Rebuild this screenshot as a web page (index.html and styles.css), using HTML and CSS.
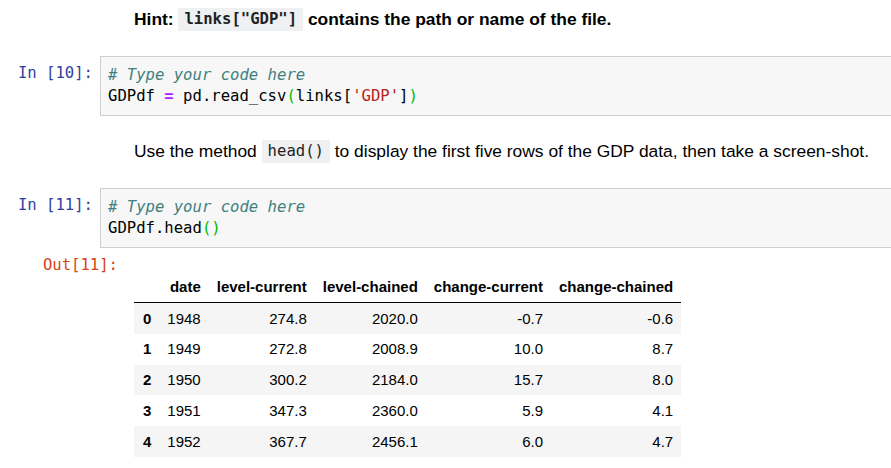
FILE: index.html
```html
<!DOCTYPE html>
<html>
<head>
<meta charset="utf-8">
<link rel="stylesheet" href="styles.css">
</head>
<body>
<div class="nb">
  <div class="md md-first">
    <p class="hint"><b>Hint: <code class="ic">links["GDP"]</code> contains the path or name of the file.</b></p>
  </div>

  <div class="cell cell-first">
    <div class="prompt in">In&nbsp;[10]:</div>
    <div class="input"><pre><span class="cm"># Type your code here</span>
GDPdf <span class="op">=</span> pd.read_csv<span class="br">(</span>links[<span class="st">'GDP'</span>]<span class="br">)</span></pre></div>
  </div>

  <div class="md">
    <p>Use the method <code class="ic">head()</code> to display the first five rows of the GDP data, then take a screen-shot.</p>
  </div>

  <div class="cell">
    <div class="prompt in">In&nbsp;[11]:</div>
    <div class="input"><pre><span class="cm"># Type your code here</span>
GDPdf.head<span class="br">()</span></pre></div>
  </div>

  <div class="output">
    <div class="prompt out">Out[11]:</div>
    <table class="df">
      <thead>
        <tr><th></th><th>date</th><th>level-current</th><th>level-chained</th><th>change-current</th><th>change-chained</th></tr>
      </thead>
      <tbody>
        <tr><th>0</th><td>1948</td><td>274.8</td><td>2020.0</td><td>-0.7</td><td>-0.6</td></tr>
        <tr><th>1</th><td>1949</td><td>272.8</td><td>2008.9</td><td>10.0</td><td>8.7</td></tr>
        <tr><th>2</th><td>1950</td><td>300.2</td><td>2184.0</td><td>15.7</td><td>8.0</td></tr>
        <tr><th>3</th><td>1951</td><td>347.3</td><td>2360.0</td><td>5.9</td><td>4.1</td></tr>
        <tr><th>4</th><td>1952</td><td>367.7</td><td>2456.1</td><td>6.0</td><td>4.7</td></tr>
      </tbody>
    </table>
  </div>
</div>
</body>
</html>
```

FILE: styles.css
```css
html, body {
  margin: 0;
  padding: 0;
  background: #fff;
  overflow: hidden;
}

.nb {
  font-family: "Liberation Sans", Arial, sans-serif;
  font-size: 17.4px;
  color: #000;
}

.md {
  padding-left: 134px;
  margin-top: 24px;
}

.md-first {
  margin-top: 8px;
}

.md p {
  margin: 0;
  height: 23px;
  line-height: 23px;
  white-space: nowrap;
}

.ic {
  display: inline-block;
  vertical-align: top;
  font-family: "DejaVu Sans Mono", "Liberation Mono", monospace;
  font-size: 15.6px;
  line-height: 23px;
  padding: 0 6px;
  background: #eff0f1;
  color: #222;
  font-weight: normal;
}

.hint .ic {
  font-weight: bold;
}

.cell {
  display: flex;
  margin-top: 25px;
}

.prompt {
  font-family: "DejaVu Sans Mono", "Liberation Mono", monospace;
  font-size: 15.6px;
  line-height: 21.5px;
  text-align: right;
  flex: none;
}

.prompt.in {
  width: 93px;
  padding-right: 7px;
  padding-top: 7px;
  color: #303f9f;
}

.input {
  flex: 1;
  background: #f7f7f7;
  border: 1px solid #cfcfcf;
  border-right: 0;
  padding: 7.5px 7px;
}

.input pre {
  margin: 0;
  font-family: "DejaVu Sans Mono", "Liberation Mono", monospace;
  font-size: 15.6px;
  line-height: 21.5px;
  color: #000;
}

.cm { color: #408080; font-style: italic; }
.op { color: #aa22ff; font-weight: bold; }
.st { color: #ba2121; }
.br { color: #00bb00; }

.output {
  display: flex;
  align-items: flex-start;
  margin-top: 7px;
}

.prompt.out {
  width: 118px;
  color: #d84315;
}

.df {
  margin-left: 16px;
  margin-top: 16px;
  border-collapse: collapse;
  border: none;
  font-size: 15px;
  color: #000;
}

.df th, .df td {
  padding: 6.8px 8px;
  text-align: right;
  line-height: 17.25px;
  white-space: nowrap;
  border: none;
}

.df th {
  font-weight: bold;
}

.df thead th {
  border-bottom: 1px solid #000;
}

.df tbody tr:nth-child(odd) {
  background: #f5f5f5;
}

.df tbody th {
  padding-left: 9px;
  padding-right: 8px;
}
```
